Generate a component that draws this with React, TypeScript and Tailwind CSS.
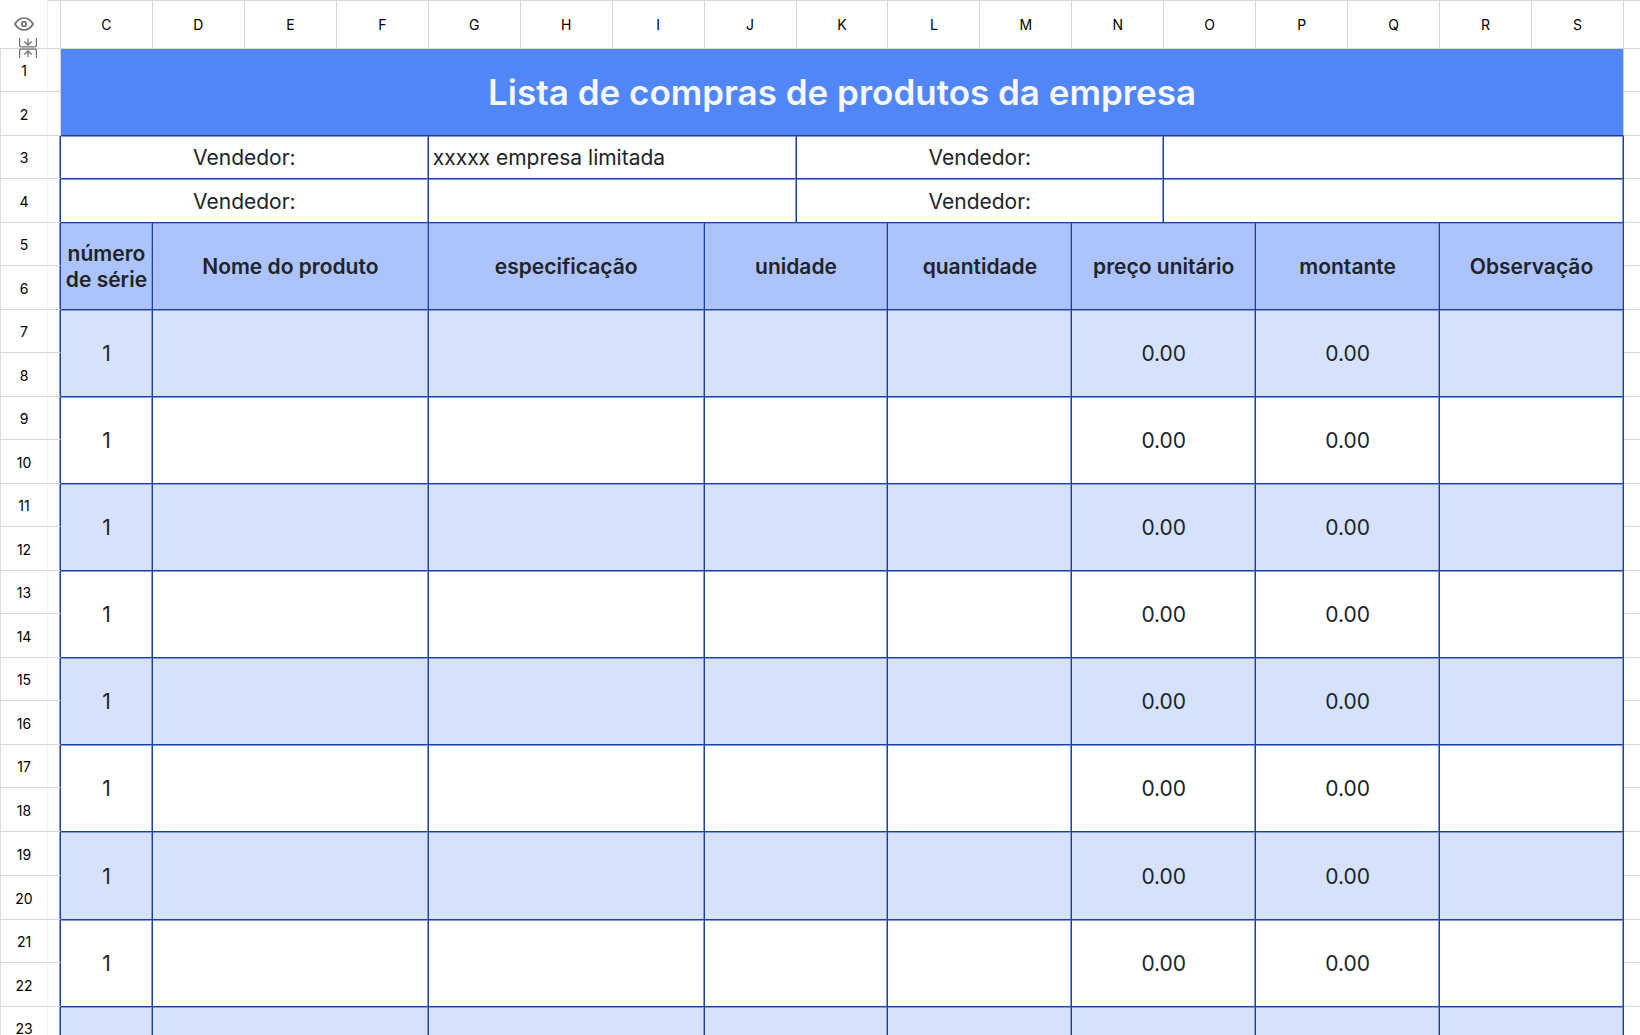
const COLUMNS = 'CDEFGHIJKLMNOPQRS'.split('')

const PRODUCT_HEADERS = [
  { label: 'número de série', span: 1 },
  { label: 'Nome do produto', span: 3 },
  { label: 'especificação', span: 3 },
  { label: 'unidade', span: 2 },
  { label: 'quantidade', span: 2 },
  { label: 'preço unitário', span: 2 },
  { label: 'montante', span: 2 },
  { label: 'Observação', span: 2 },
]

const EMPTY_PRODUCT = ['', '', '', '', '', '', '', '']
const PRODUCTS = [
  ...Array.from({ length: 8 }, () => ['1', '', '', '', '', '0.00', '0.00', '']),
  EMPTY_PRODUCT,
]

const NAVY = 'pt-0.5 border-r border-b border-[#1c40a3] shadow-[inset_-1px_1px_0_#7f99dd]'

function EyeIcon() {
  return (
    <svg width="20" height="14" viewBox="0 0 20 14" fill="none" stroke="#6b6b6b" strokeWidth="1.6">
      <path d="M1 7C3 3.400 6.200 1 10 1s7 2.400 9 6c-2 3.600-5.200 6-9 6S3 10.600 1 7Z" strokeLinejoin="round" />
      <circle cx="10" cy="7" r="2.300" />
    </svg>
  )
}

function CollapseIcon() {
  return (
    <svg width="18" height="20" viewBox="0 0 18 20" fill="none" stroke="#747474" strokeWidth="1.300">
      <path d="M.6 0v7.500q0 1.400 1.400 1.400h14q1.400 0 1.400-1.400V0M.6 20v-7.500q0-1.400 1.400-1.400h14q1.400 0 1.400 1.400V20" />
      <path d="M9 .5v6.500M5.300 3.500 9 7l3.700-3.500M9 19v-6.200M5.300 16.500 9 13l3.700 3.500" />
    </svg>
  )
}

interface SheetRowProps {
  number: number
  navy?: boolean
  children?: React.ReactNode
}

// One numbered row: number gutter, sliver of column B, the cells, sliver of column T
function SheetRow({ number, navy, children }: SheetRowProps) {
  return (
    <tr className={number % 2 === 0 || number === 19 ? 'h-11' : 'h-[43px]'}>
      <th
        scope="row"
        className="border-b border-l border-r border-b-[#d6d6d6] border-l-[#dedede] border-r-[#f3f3f3] pt-0.5 text-sm font-normal text-black"
      >
        {number}
      </th>
      <td
        className={`border-r border-b border-b-[#d6d6d6] ${
          navy ? 'border-r-[#1c40a3] shadow-[inset_-1px_0_0_#7f99dd]' : 'border-r-[#d6d6d6]'
        }`}
      />
      {children}
      <td className="border-b border-[#d6d6d6]" />
    </tr>
  )
}

export default function App() {
  return (
    <div className="h-screen overflow-hidden bg-white font-['Inter',sans-serif] text-[#202429]">
      <table className="w-full table-fixed border-separate border-spacing-0 text-center">
        <colgroup>
          <col className="w-12" />
          <col className="w-[13px]" />
          {COLUMNS.map(c => (
            <col key={c} />
          ))}
          <col className="w-4" />
        </colgroup>
        <thead>
          <tr className="h-[49px]">
            <td className="relative border-r border-b border-r-[#ededed] border-b-[#d6d6d6]">
              <button aria-label="Mostrar" className="block w-full">
                <span className="flex justify-center">
                  <EyeIcon />
                </span>
              </button>
              <button aria-label="Recolher" className="absolute top-[38px] left-[19px] z-10">
                <CollapseIcon />
              </button>
            </td>
            <td className="border-t border-r border-b border-[#d6d6d6]" />
            {COLUMNS.map(c => (
              <th
                key={c}
                scope="col"
                className="border-t border-r border-b border-[#d6d6d6] text-sm font-normal text-black"
              >
                {c}
              </th>
            ))}
            <td className="border-t border-b border-[#d6d6d6]" />
          </tr>
        </thead>
        <tbody className="text-[21px] leading-[26px]">
          <SheetRow number={1}>
            <td
              colSpan={17}
              rowSpan={2}
              className="border-r border-b border-r-[#c4d3f5] border-b-[#1c40a3] bg-[#5086f5] text-[35px] leading-[44px] font-semibold text-[#f5f7fa]"
            >
              Lista de compras de produtos da empresa
            </td>
          </SheetRow>
          <SheetRow number={2} />
          {[3, 4].map(n => (
            <SheetRow key={n} number={n} navy>
              <td colSpan={4} className={NAVY}>
                Vendedor:
              </td>
              <td colSpan={4} className={`pl-1 text-left ${NAVY}`}>
                {n === 3 && 'xxxxx empresa limitada'}
              </td>
              <td colSpan={4} className={NAVY}>
                Vendedor:
              </td>
              <td colSpan={5} className={NAVY} />
            </SheetRow>
          ))}
          <SheetRow number={5} navy>
            {PRODUCT_HEADERS.map(h => (
              <th key={h.label} colSpan={h.span} rowSpan={2} className={`bg-[#adc3fc] font-semibold ${NAVY}`}>
                {h.label}
              </th>
            ))}
          </SheetRow>
          <SheetRow number={6} navy />
          {PRODUCTS.flatMap((product, i) => [
            <SheetRow key={`${i}-top`} number={7 + i * 2} navy>
              {product.map((value, j) => (
                <td
                  key={j}
                  colSpan={PRODUCT_HEADERS[j].span}
                  rowSpan={2}
                  className={`${i % 2 === 0 ? 'bg-[#d6e1fc]' : ''} ${NAVY}`}
                >
                  {value}
                </td>
              ))}
            </SheetRow>,
            <SheetRow key={`${i}-bottom`} number={8 + i * 2} navy />,
          ])}
        </tbody>
      </table>
    </div>
  )
}
